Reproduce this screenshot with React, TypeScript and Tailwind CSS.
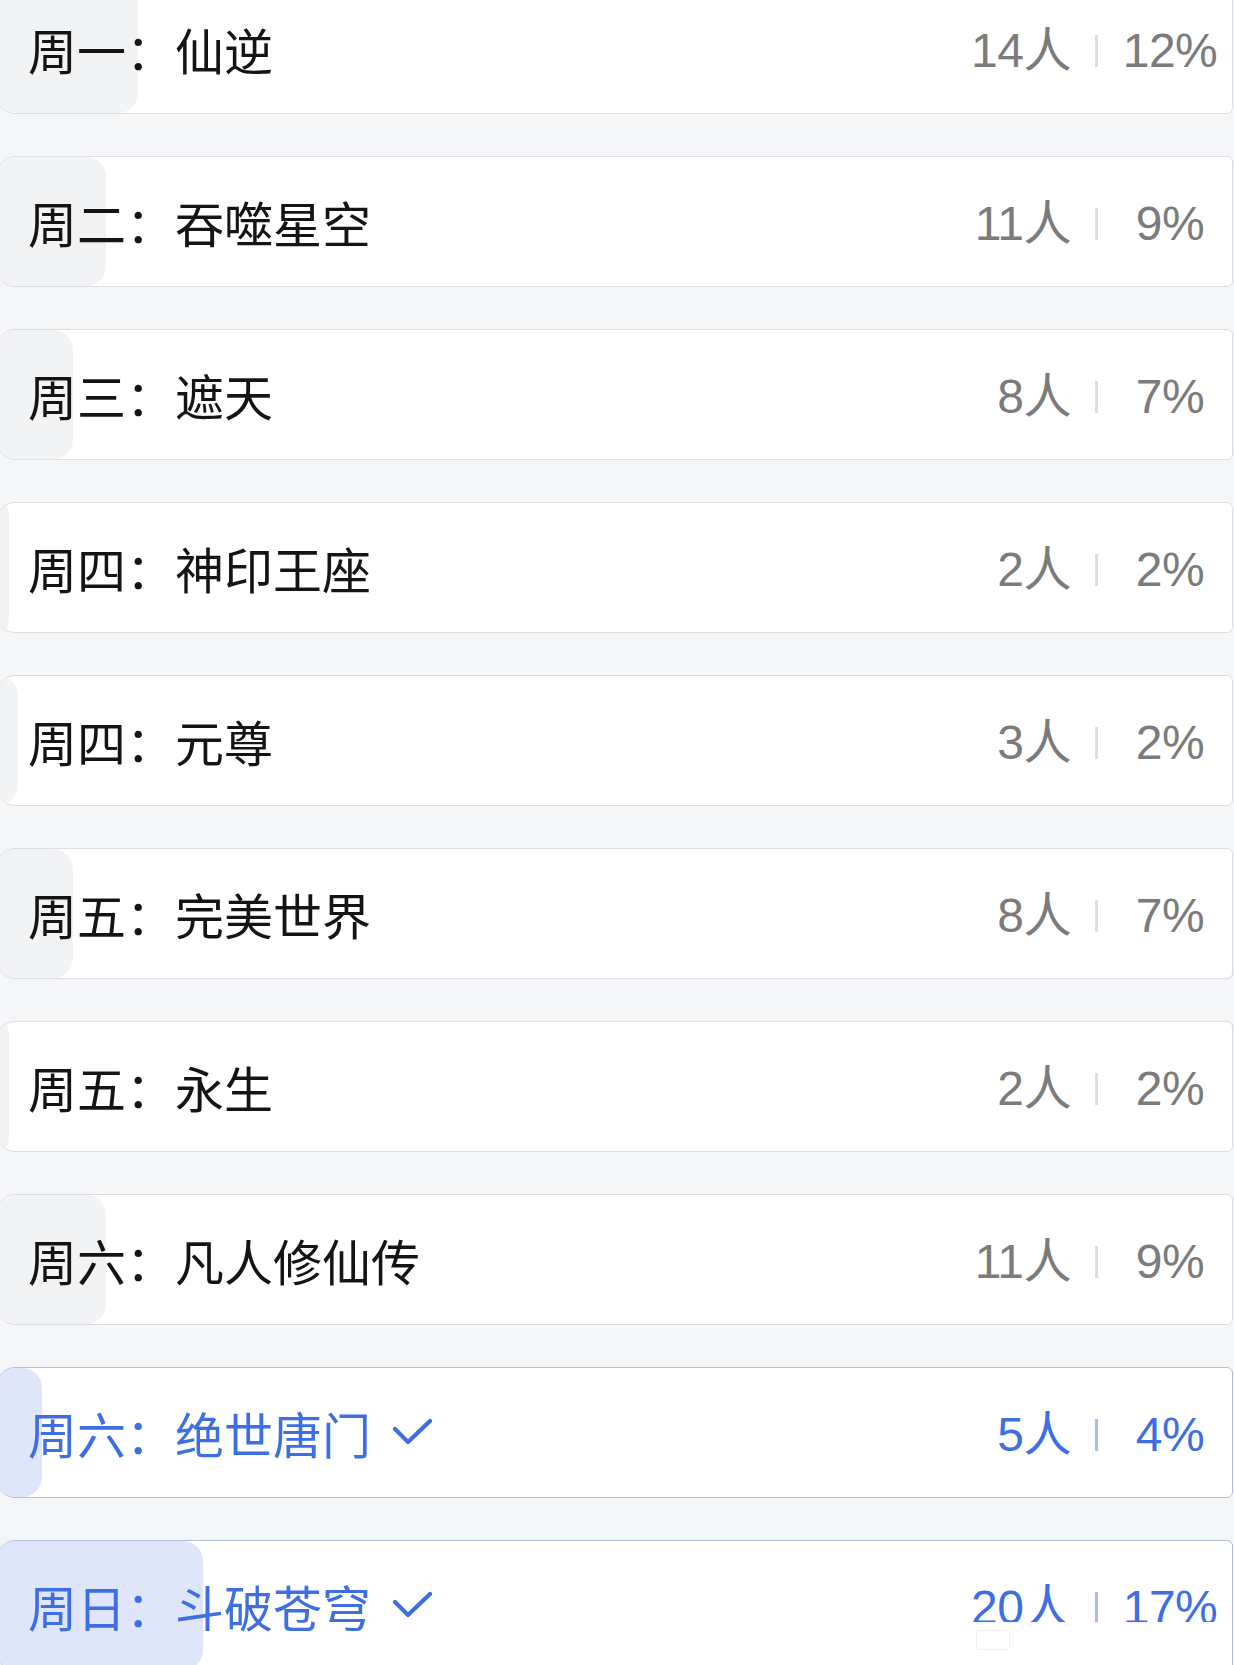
import React from "react";

type Row = {
  day: string;
  name: string;
  count: string;
  pct: string;
  fill: number;
  selected?: boolean;
};

const rows: Row[] = [
  { day: "周一", name: "仙逆", count: "14人", pct: "12%", fill: 140 },
  { day: "周二", name: "吞噬星空", count: "11人", pct: "9%", fill: 108 },
  { day: "周三", name: "遮天", count: "8人", pct: "7%", fill: 75 },
  { day: "周四", name: "神印王座", count: "2人", pct: "2%", fill: 11 },
  { day: "周四", name: "元尊", count: "3人", pct: "2%", fill: 20 },
  { day: "周五", name: "完美世界", count: "8人", pct: "7%", fill: 75 },
  { day: "周五", name: "永生", count: "2人", pct: "2%", fill: 11 },
  { day: "周六", name: "凡人修仙传", count: "11人", pct: "9%", fill: 108 },
  { day: "周六", name: "绝世唐门", count: "5人", pct: "4%", fill: 44, selected: true },
  { day: "周日", name: "斗破苍穹", count: "20人", pct: "17%", fill: 205, selected: true },
];

const cjk = { fontFamily: '"Noto Sans CJK SC", "Noto Sans", sans-serif' };
const num = { fontFamily: '"Liberation Sans", "Noto Sans CJK SC", sans-serif' };

function Check() {
  return (
    <svg width="40" height="28" viewBox="0 0 40 28" className="ml-[21px] mt-[-2px]">
      <polyline
        points="3,11 16,24 38,3"
        fill="none"
        stroke="#3d6fe3"
        strokeWidth="4.2"
        strokeLinecap="round"
        strokeLinejoin="round"
      />
    </svg>
  );
}

function Card({ r }: { r: Row }) {
  const sel = !!r.selected;
  return (
    <div
      className={
        "relative ml-[-3px] w-[1236px] h-[131px] shrink-0 overflow-hidden rounded-l-[18px] rounded-r-[6px] border-[1.5px] bg-white " +
        (sel ? "border-[#b3bedf]" : "border-[#dcdde1]")
      }
    >
      <div
        className={
          "absolute left-0 top-0 bottom-0 rounded-r-[20px] " +
          (sel ? "bg-[#dfe5fb]" : "bg-[#f2f3f5]")
        }
        style={{ width: r.fill }}
      />
      <div className="relative flex h-full items-center pl-[30px]">
        <div
          className={"flex items-center text-[49px] leading-none " + (sel ? "text-[#3d6fe3]" : "text-[#141414]")}
          style={cjk}
        >
          <span>{r.day}：</span>
          <span>{r.name}</span>
          {sel && <Check />}
        </div>
        <div className="flex-1" />
        <div
          className={"mt-[4px] flex items-center text-[48px] leading-none " + (sel ? "text-[#3d6fe3]" : "text-[#7b7b7b]")}
          style={num}
        >
          <span className="tracking-[-0.5px]">{r.count}</span>
          <span
            className={"ml-[24px] h-[32px] w-[3px] " + (sel ? "bg-[#a9baee]" : "bg-[#dedede]")}
          />
          <span className="ml-[10px] w-[124px] text-center tracking-[-0.5px]">{r.pct}</span>
        </div>
      </div>
    </div>
  );
}

export default function App() {
  return (
    <div className="relative h-[1665px] w-[1234px] overflow-hidden bg-[#f5f6f8]">
      <div className="mt-[-17px] flex flex-col gap-[42px]">
        {rows.map((r, i) => (
          <Card key={i} r={r} />
        ))}
      </div>
      <div className="absolute left-[958px] top-[1622px] h-[32px] w-[262px] bg-white/95" />
      <div className="absolute left-[976px] top-[1630px] h-[20px] w-[34px] rounded-[4px] border border-[#eeeeee]" />
    </div>
  );
}
